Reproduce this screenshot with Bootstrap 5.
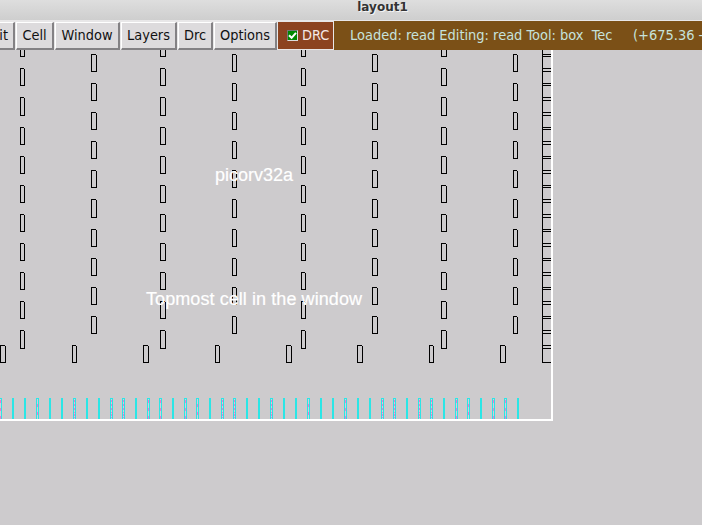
<!DOCTYPE html>
<html lang="en">
<head>
<meta charset="utf-8">
<title>layout1</title>
<link href="https://cdn.jsdelivr.net/npm/bootstrap@5.3.0/dist/css/bootstrap.min.css" rel="stylesheet">
<style>
body{width:702px;height:525px;background:#cdcbcd;font-family:"DejaVu Sans",sans-serif;color:#111}
.titlebar{height:20px;background:linear-gradient(#dedede,#cecece);font-size:12px;line-height:14px;font-weight:700;color:#333;padding-left:63px;text-shadow:1px 1px #f4f4f4}
.menus{height:30px;background:#e8e7e8;font-family:"DejaVu Sans Condensed","DejaVu Sans",sans-serif;font-size:14.4px;padding-top:2px}
.mbtn{height:28px;line-height:25px;background:#dddbdd;border:solid;border-width:1px 2px 2px 1px;border-color:#fff #838184 #838184 #fff;margin-right:1px;color:#111}
.w-edit{width:15px;border-left:0;padding-right:5px}
.w-cell{width:38px}.w-window{width:65px}.w-layers{width:56px}.w-drc{width:35px}.w-options{width:63px}
.drc{width:55px;height:27px;background:#8c4320;color:#f4e8e6;padding-left:9px;margin-right:1px}
.tick{width:11px;height:11px;background:#080;border:1px solid;border-color:#777 #ddd #ddd #777;margin-right:4px}
.info{height:29px;margin-top:-1px;width:368px;background:#7b5017;color:#c6e2dc;font-size:14.46px;padding-left:16px;line-height:28px;white-space:pre}
.plan{height:475px}
.plan text{font-family:"Liberation Sans",sans-serif;font-size:18px;fill:#fff;stroke:#fff;stroke-width:.2px}
</style>
</head>
<body class="overflow-hidden m-0">
<header class="titlebar d-flex justify-content-center">layout1</header>
<nav class="menus d-flex overflow-hidden text-nowrap">
<div class="mbtn w-edit flex-shrink-0 d-flex justify-content-end">it</div>
<div class="mbtn w-cell flex-shrink-0 text-center">Cell</div>
<div class="mbtn w-window flex-shrink-0 text-center">Window</div>
<div class="mbtn w-layers flex-shrink-0 text-center">Layers</div>
<div class="mbtn w-drc flex-shrink-0 text-center">Drc</div>
<div class="mbtn w-options flex-shrink-0 text-center">Options</div>
<label class="drc flex-shrink-0 d-flex align-items-center"><svg class="tick flex-shrink-0" viewBox="0 0 9 9"><path d="M1 4.2 3.6 6.8 8 1.8" fill="none" stroke="#fff" stroke-width="2"/></svg>DRC</label>
<div class="info flex-shrink-0 overflow-hidden">Loaded: read Editing: read Tool: box  Tec     (+675.36 -</div>
</nav>
<main class="plan">
<svg class="d-block" width="702" height="475" viewBox="0 50 702 475">
<g id="shapes" shape-rendering="crispEdges"></g>
<text x="215" y="181" textLength="78">picorv32a</text>
<text x="146" y="305" textLength="216">Topmost cell in the window</text>
</svg>
</main>
<script src="https://cdn.jsdelivr.net/npm/bootstrap@5.3.0/dist/js/bootstrap.bundle.min.js"></script>
<script>
const shapes = document.getElementById('shapes');
let out = '';
const bar = (x, y, w, h, c = '#000') => out += `<rect x="${x}" y="${y}" width="${w}" height="${h}" fill="${c}"/>`;
// Via outline with an open top-right pixel
const via = (x, top, bottom, w) => {
  bar(x, top, 1, bottom - top + 1);
  bar(x, top, w - 1, 1);
  bar(x, bottom, w, 1);
  bar(x + w - 1, top + 1, 1, bottom - top);
};
const evenRows = [[39,56],[68,85],[97,115],[127,144],[156,173],[185,202],[214,231],[243,260],[272,289],[301,318],[330,348]];
const oddRows = [[54,71],[83,100],[112,129],[141,158],[170,187],[199,217],[229,246],[258,275],[287,304],[316,333]];
[[20,5],[160,6],[301,5],[441,6]].forEach(([x, w]) => evenRows.forEach(r => via(x, r[0], r[1], w)));
[[91,6],[232,5],[372,6],[513,5]].forEach(([x, w]) => oddRows.forEach(r => via(x, r[0], r[1], w)));
[[0,6],[72,5],[143,6],[215,5],[286,6],[357,6],[429,5],[500,6]].forEach(([x, w]) => via(x, 345, 362, w));
// Right-hand ladder and cell boundary
bar(542, 50, 1, 313);
[...evenRows, ...oddRows, [345,362]].flat().forEach(y => bar(542, y, 9, 1));
bar(551, 50, 2, 371, '#fff');
bar(0, 419, 553, 2, '#fff');
// Pins along the lower edge
const cyan = '#2be6e6', pink = '#f774cf';
[12,24,49,61,86,98,135,172,209,246,258,283,295,320,332,357,369,406,443,480,517].forEach(x => bar(x, 398, 2, 21, cyan));
const striped = {'-1':'L',36:'T',73:'S',110:'S',122:'S',147:'L',159:'L',184:'L',196:'T',221:'S',233:'S',270:'S',307:'T',344:'L',381:'S',393:'S',418:'S',430:'S',455:'L',467:'T',492:'L',504:'L'};
for (const [key, kind] of Object.entries(striped)) {
  const x = +key;
  bar(x, 398, 3, 21, cyan);
  bar(x + 1, 399, 1, 20, '#d6cbd6');
  const dashes = {L:[[400,3],[408,3],[416,3]], T:[[404,3],[412,3]], S:[[400,2],[404,2],[408,2],[412,1],[414,2],[417,1]]}[kind];
  dashes.forEach(([y, h]) => bar(x + 1, y, 1, h, pink));
}
shapes.innerHTML = out;
</script>
</body>
</html>
